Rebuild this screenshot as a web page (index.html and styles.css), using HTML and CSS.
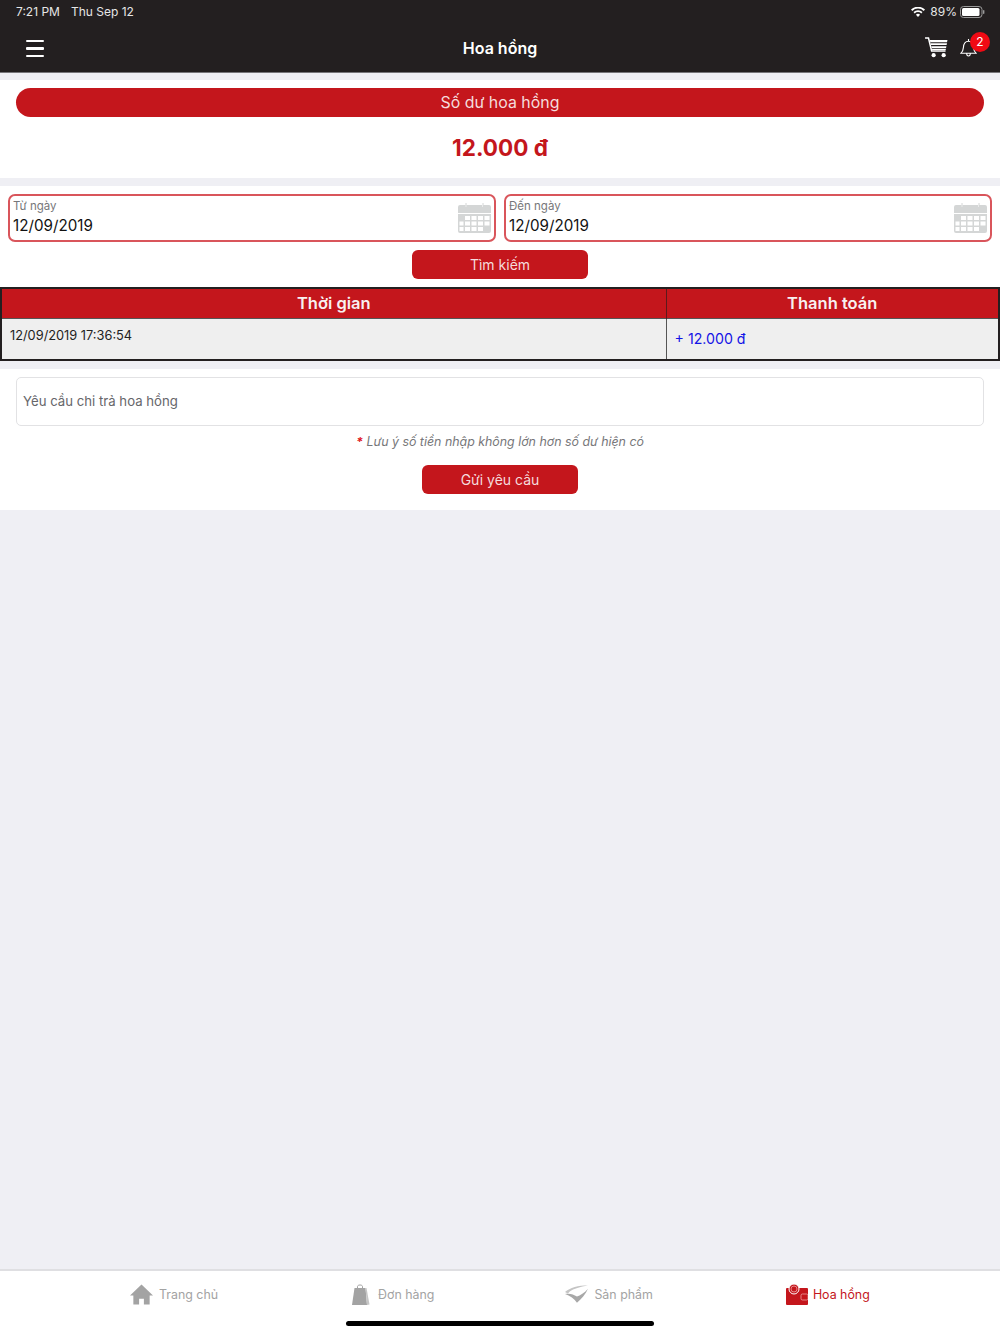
FILE: index.html
```html
<!DOCTYPE html>
<html>

<head>
    <title>Hoa hồng</title>
    <meta name="viewport" content="width=device-width, initial-scale=1.0">
    <link rel="stylesheet" href="styles.css">
</head>

<body>
    <header class="topbar">
        <div class="statusbar">
            <span class="statustime">7:21 PM</span>
            <span class="statusdate">Thu Sep 12</span>
            <span class="statusright">
                <svg class="wifi" width="14" height="10" viewBox="0 0 14 10">
                    <path d="M7 10 4.9 7.7a3 3 0 0 1 4.2 0zM3.700 6.400 2.500 5.100a6.400 6.400 0 0 1 9 0l-1.200 1.300a4.700 4.700 0 0 0-6.600 0zM1.300 3.900 0 2.600a9.900 9.900 0 0 1 14 0l-1.300 1.300a8.100 8.100 0 0 0-11.400 0z" fill="#fff" />
                </svg>
                <span>89%</span>
                <svg width="25" height="12" viewBox="0 0 25 12">
                    <rect x="0.5" y="0.5" width="21.5" height="11" rx="3" fill="none" stroke="#9a9a9a" />
                    <rect x="2" y="2" width="17.5" height="8" rx="1.5" fill="#fff" />
                    <rect x="23" y="4" width="1.4" height="4" rx="0.7" fill="#9a9a9a" />
                </svg>
            </span>
        </div>
        <div class="navbar">
            <div class="menubutton"><span></span><span></span><span></span></div>
            <h1 class="navtitle">Hoa hồng</h1>
            <div class="navicons">
                <svg width="23" height="21" viewBox="0 0 24 22">
                    <path d="M0 1h3.600l3.300 13.600h14.600" fill="none" stroke="#fff" stroke-width="1.600" />
                    <path d="M5 3.200h18.500l-.5 2.200H5.500zM5.800 6.500H23l-.4 2H6.200zM6.500 9.600h15.900l-.4 2H7zM7.200 12.400h14.700l-.3 1.200H7.500z" fill="#fff" />
                    <circle cx="9" cy="19" r="2.200" fill="#fff" />
                    <circle cx="19.500" cy="19" r="2.200" fill="#fff" />
                </svg>
                <div class="bell">
                    <svg width="17" height="19" viewBox="0 0 17 19">
                        <path d="M1 15.200c1.600-1.500 2.200-3 2.400-5.600C3.600 6 4.800 3.200 8.500 3.200s4.900 2.800 5.100 6.400c.2 2.600.8 4.100 2.400 5.600zM6.700 15.500c0 3.300 3.600 3.300 3.600 0M8.500 1v2" fill="none" stroke="#fff" stroke-width="1.100" />
                    </svg>
                    <span class="badge">2</span>
                </div>
            </div>
        </div>
    </header>

    <section class="panel balance">
        <div class="pill">Số dư hoa hồng</div>
        <div class="amount">12.000 đ</div>
    </section>

    <section class="panel history">
        <div class="dates">
            <div class="datebox">
                <div class="datetext">
                    <div class="datelabel">Từ ngày</div>
                    <div class="datevalue">12/09/2019</div>
                </div>
                <svg class="calendar" width="33" height="30" viewBox="0 0 33 30">
                    <path d="M2 2h5.500v2h1V2h15.500v2h1V2H31a2 2 0 0 1 2 2v6H0V4a2 2 0 0 1 2-2z" fill="#d4d6d6" />
                    <path d="M0 11h33v17a2 2 0 0 1-2 2H2a2 2 0 0 1-2-2z" fill="#d4d6d6" />
                    <path d="M8 0v4M25 0v4" stroke="#d4d6d6" stroke-width="1" />
                    <path d="M7 13h5v4H7zM13.500 13h5v4h-5zM20 13h5v4h-5zM26.500 13h5v4h-5zM1.500 18.500h4v4h-4zM7 18.500h5v4H7zM13.500 18.500h5v4h-5zM20 18.500h5v4h-5zM26.500 18.500h5v4h-5zM1.500 24h4v4h-4zM7 24h5v4H7zM13.500 24h5v4h-5zM20 24h5v4h-5z" fill="#fff" />
                </svg>
            </div>
            <div class="datebox">
                <div class="datetext">
                    <div class="datelabel">Đến ngày</div>
                    <div class="datevalue">12/09/2019</div>
                </div>
                <svg class="calendar" width="33" height="30" viewBox="0 0 33 30">
                    <path d="M2 2h5.500v2h1V2h15.500v2h1V2H31a2 2 0 0 1 2 2v6H0V4a2 2 0 0 1 2-2z" fill="#d4d6d6" />
                    <path d="M0 11h33v17a2 2 0 0 1-2 2H2a2 2 0 0 1-2-2z" fill="#d4d6d6" />
                    <path d="M8 0v4M25 0v4" stroke="#d4d6d6" stroke-width="1" />
                    <path d="M7 13h5v4H7zM13.500 13h5v4h-5zM20 13h5v4h-5zM26.500 13h5v4h-5zM1.500 18.500h4v4h-4zM7 18.500h5v4H7zM13.500 18.500h5v4h-5zM20 18.500h5v4h-5zM26.500 18.500h5v4h-5zM1.500 24h4v4h-4zM7 24h5v4H7zM13.500 24h5v4h-5zM20 24h5v4h-5z" fill="#fff" />
                </svg>
            </div>
        </div>
        <button class="redbutton searchbutton">Tìm kiếm</button>
        <table class="logtable">
            <thead>
                <tr>
                    <th class="timecol">Thời gian</th>
                    <th>Thanh toán</th>
                </tr>
            </thead>
            <tbody>
                <tr>
                    <td class="timecell">12/09/2019 17:36:54</td>
                    <td class="paycell">+ 12.000 đ</td>
                </tr>
            </tbody>
        </table>
    </section>

    <section class="panel request">
        <div class="requestinput">Yêu cầu chi trả hoa hồng</div>
        <p class="note"><span class="star">*</span> Lưu ý số tiền nhập không lớn hơn số dư hiện có</p>
        <button class="redbutton sendbutton">Gửi yêu cầu</button>
    </section>

    <div class="spacer"></div>

    <footer class="tabbar">
        <div class="tabs">
            <div class="tab tabhome">
                <svg width="23" height="21" viewBox="0 0 24 21">
                    <path d="M12 0 24 11.500h-3.500V21H14.500v-6h-5v6H3.500v-9.500H0z" fill="#a3a3a3" />
                </svg>
                <span>Trang chủ</span>
            </div>
            <div class="tab taborder">
                <svg width="18" height="21" viewBox="0 0 18 21">
                    <path d="M2.500 4h11l1.500 17H0z" fill="#a3a3a3" />
                    <path d="M13.500 4h1l3 16.500L15 21z" fill="#c6c6c6" />
                    <path d="M5.500 6V2.500C5.500.5 10.500.5 10.500 2.500V6" fill="none" stroke="#a3a3a3" stroke-width="1" />
                </svg>
                <span>Đơn hàng</span>
            </div>
            <div class="tab tabproduct">
                <svg width="23" height="18" viewBox="0 0 24 18">
                    <path d="M0 7C5 2 14 0 24 0 16 1.500 9 3 5 6.500L3 8.500z" fill="#c4c4c4" />
                    <path d="M0 9C5 8 9 9.500 12.500 11.500 16 10.500 20 8 24 3.500 21.500 9.500 17 14 12.500 18 10 14 5 11 0 9z" fill="#a8a8a8" />
                </svg>
                <span>Sản phẩm</span>
            </div>
            <div class="tab tabwallet">
                <svg width="22" height="21" viewBox="0 0 22 21">
                    <path d="M1 4h20a1 1 0 0 1 1 1v15a1 1 0 0 1-1 1H1a1 1 0 0 1-1-1V5a1 1 0 0 1 1-1z" fill="#c4161c" />
                    <circle cx="8" cy="5" r="5" fill="#c4161c" stroke="#fff" stroke-width="1" />
                    <circle cx="8" cy="5" r="3" fill="none" stroke="#f3b5b5" stroke-width="0.7" />
                    <rect x="15" y="10" width="7" height="6" rx="1.500" fill="#c4161c" stroke="#f3b5b5" stroke-width="0.7" />
                </svg>
                <span>Hoa hồng</span>
            </div>
        </div>
        <div class="homebar"></div>
    </footer>
</body>

</html>
```

FILE: styles.css
```css
* {
    font-family: Inter, "Liberation Sans", sans-serif;
    box-sizing: border-box;
}

html,
body {
    height: 100%;
}

body {
    margin: 0;
    min-height: 1334px;
    display: flex;
    flex-direction: column;
    background-color: #efeff4;
}

.topbar {
    height: 73px;
    background-color: #231f20;
    border-bottom: 1px solid #77767a;
    color: white;
}

.statusbar {
    display: flex;
    align-items: center;
    height: 23px;
    padding: 0 15px 0 16px;
    font-size: 12px;
    color: #e6e6e6;
}

.statusdate {
    margin-left: 11px;
}

.statusright {
    margin-left: auto;
    display: flex;
    align-items: center;
    gap: 3px;
}

.wifi {
    margin-right: 2px;
}

.navbar {
    height: 49px;
    display: grid;
    grid-template-columns: 1fr auto 1fr;
    align-items: center;
    padding: 0 12px;
}

.menubutton {
    width: 18px;
    margin: 2px 0 0 14px;
}

.menubutton span {
    display: block;
    height: 2.5px;
    background-color: white;
    border-radius: 1px;
    margin-bottom: 5px;
}

.menubutton span:last-child {
    margin-bottom: 0;
}

.navtitle {
    margin: 0;
    font-size: 16px;
    font-weight: 600;
}

.navicons {
    display: flex;
    align-items: center;
    justify-content: flex-end;
    gap: 12px;
}

.bell {
    position: relative;
    width: 28px;
    height: 20px;
}

.badge {
    position: absolute;
    left: 10px;
    top: -6px;
    width: 20px;
    height: 20px;
    border-radius: 50%;
    background-color: #f00a14;
    font-size: 12px;
    line-height: 20px;
    text-align: center;
}

.panel {
    background-color: white;
}

.balance {
    margin-top: 7px;
    height: 98px;
    padding: 8px 16px 0;
    text-align: center;
}

.pill {
    height: 29px;
    line-height: 30px;
    border-radius: 15px;
    background-color: #c4161c;
    color: #f5dcdc;
    font-size: 15.9px;
}

.amount {
    margin-top: 16px;
    font-size: 22.5px;
    line-height: 30px;
    font-weight: 700;
    color: #c4161c;
}

.history {
    margin-top: 8px;
    height: 175px;
    display: flex;
    flex-direction: column;
    align-items: center;
    padding-top: 8px;
}

.dates {
    width: 100%;
    display: flex;
    gap: 8px;
    padding: 0 8px;
}

.datebox {
    flex: 1;
    height: 48px;
    display: flex;
    justify-content: space-between;
    align-items: center;
    border: 2px solid #d9555b;
    border-radius: 7px;
    padding: 0 3px;
}

.datetext {
    padding-bottom: 2px;
}

.datelabel {
    font-size: 11.5px;
    line-height: 14px;
    color: #77777a;
}

.datevalue {
    margin-top: 3px;
    font-size: 15.2px;
    line-height: 19px;
    color: #111111;
}

.redbutton {
    display: block;
    height: 29px;
    padding: 0;
    border: none;
    border-radius: 6px;
    background-color: #c4161c;
    color: #f5dcdc;
    font-size: 14px;
}

.searchbutton {
    width: 176px;
    margin-top: 8px;
}

.logtable {
    width: 100%;
    margin-top: 8px;
    border-collapse: collapse;
    table-layout: fixed;
    border: 2px solid #231f20;
}

.logtable th {
    height: 30px;
    padding: 0;
    background-color: #c4161c;
    color: #f8f0f0;
    font-size: 16.5px;
    font-weight: 600;
    border-right: 1px solid #5c1a1c;
}

.timecol {
    width: 665px;
}

.logtable td {
    height: 42px;
    background-color: #efefef;
    border-top: 1px solid #555555;
    border-right: 1px solid #555555;
}

.timecell {
    padding: 0 8px 7px;
    font-size: 12.8px;
    color: #222222;
}

.paycell {
    padding: 0 8px;
    font-size: 14.2px;
    color: #1414e6;
}

.request {
    margin-top: 8px;
    height: 141px;
    padding: 8px 16px 0;
    text-align: center;
}

.requestinput {
    height: 49px;
    line-height: 46px;
    padding-left: 6px;
    border: 1px solid #e2e2e4;
    border-radius: 5px;
    text-align: left;
    font-size: 13.2px;
    color: #66666a;
}

.note {
    margin: 8px 0 0;
    font-size: 12.4px;
    line-height: 16px;
    font-style: italic;
    color: #77777a;
}

.star {
    color: #e0141c;
    font-weight: 700;
}

.sendbutton {
    width: 156px;
    margin: 15px auto 0;
}

.spacer {
    flex: 1;
}

.tabbar {
    height: 65px;
    background-color: white;
    border-top: 2px solid #dfdfe2;
}

.tabs {
    display: flex;
    height: 46px;
}

.tab {
    display: flex;
    align-items: center;
    font-size: 12.4px;
    color: #a3a3a3;
}

.tabhome {
    margin-left: 130px;
    gap: 6px;
}

.taborder {
    margin-left: 134px;
    gap: 8px;
}

.tabproduct {
    margin-left: 131px;
    gap: 6px;
}

.tabwallet {
    margin-left: 133px;
    gap: 5px;
    color: #c4161c;
}

.homebar {
    width: 308px;
    height: 5px;
    margin: 4px auto 0;
    border-radius: 3px;
    background-color: black;
}
```
